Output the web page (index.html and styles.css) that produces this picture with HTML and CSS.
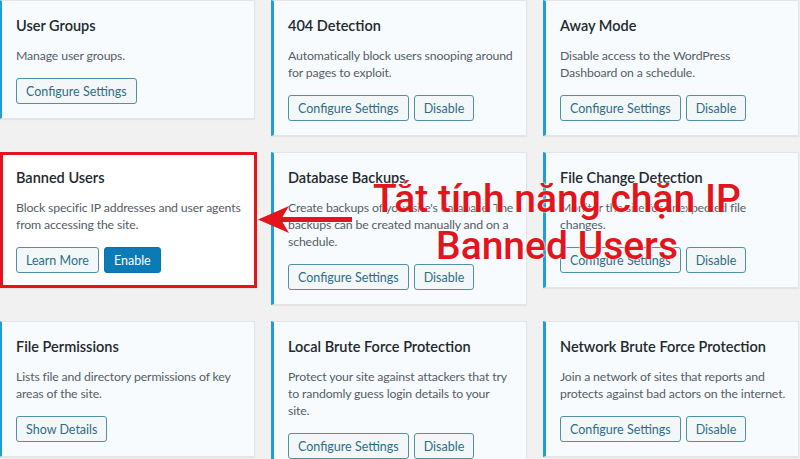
FILE: index.html
```html
<!DOCTYPE html>
<html lang="vi">

<head>
    <meta charset="UTF-8">
    <meta name="viewport" content="width=device-width, initial-scale=1.0">
    <title>Security Modules</title>
    <link rel="stylesheet" href="styles.css">
</head>

<body>
    <div class="modules">

        <div class="module active">
            <h3 class="module-title">User Groups</h3>
            <p class="module-desc">Manage user groups.</p>
            <div class="module-actions">
                <button class="btn">Configure Settings</button>
            </div>
        </div>

        <div class="module active">
            <h3 class="module-title">404 Detection</h3>
            <p class="module-desc">Automatically block users snooping around<br>for pages to exploit.</p>
            <div class="module-actions">
                <button class="btn">Configure Settings</button>
                <button class="btn">Disable</button>
            </div>
        </div>

        <div class="module active">
            <h3 class="module-title">Away Mode</h3>
            <p class="module-desc">Disable access to the WordPress<br>Dashboard on a schedule.</p>
            <div class="module-actions">
                <button class="btn">Configure Settings</button>
                <button class="btn">Disable</button>
            </div>
        </div>

        <div class="module highlight">
            <h3 class="module-title">Banned Users</h3>
            <p class="module-desc">Block specific IP addresses and user agents<br>from accessing the site.</p>
            <div class="module-actions">
                <button class="btn">Learn More</button>
                <button class="btn btn-primary">Enable</button>
            </div>
        </div>

        <div class="module active">
            <h3 class="module-title">Database Backups</h3>
            <p class="module-desc">Create backups of your site's database. The<br>backups can be created manually and on a<br>schedule.</p>
            <div class="module-actions">
                <button class="btn">Configure Settings</button>
                <button class="btn">Disable</button>
            </div>
        </div>

        <div class="module active">
            <h3 class="module-title">File Change Detection</h3>
            <p class="module-desc">Monitor the site for unexpected file<br>changes.</p>
            <div class="module-actions">
                <button class="btn">Configure Settings</button>
                <button class="btn">Disable</button>
            </div>
        </div>

        <div class="module active">
            <h3 class="module-title">File Permissions</h3>
            <p class="module-desc">Lists file and directory permissions of key<br>areas of the site.</p>
            <div class="module-actions">
                <button class="btn">Show Details</button>
            </div>
        </div>

        <div class="module active">
            <h3 class="module-title">Local Brute Force Protection</h3>
            <p class="module-desc">Protect your site against attackers that try<br>to randomly guess login details to your<br>site.</p>
            <div class="module-actions">
                <button class="btn">Configure Settings</button>
                <button class="btn">Disable</button>
            </div>
        </div>

        <div class="module active">
            <h3 class="module-title">Network Brute Force Protection</h3>
            <p class="module-desc">Join a network of sites that reports and<br>protects against bad actors on the internet.</p>
            <div class="module-actions">
                <button class="btn">Configure Settings</button>
                <button class="btn">Disable</button>
            </div>
        </div>

    </div>

    <!-- chú thích đè lên ảnh -->
    <svg class="note-arrow" width="96" height="30" viewBox="0 0 96 30">
        <path d="M0 13.5 L31 0 L23 13.5 L31 27 Z" fill="#e3141b" />
        <rect x="20" y="11" width="74" height="5" fill="#e3141b" />
    </svg>
    <div class="note-text">Tắt tính năng chặn IP<br>Banned Users</div>
</body>

</html>
```

FILE: styles.css
```css
body {
    margin: 0;
    padding: 0;
    height: 459px;
    overflow: hidden;
    background-color: #f1f1f1;
    font-family: Lato, "Open Sans", sans-serif;
    position: relative;
}

.modules {
    display: grid;
    grid-template-columns: 256px 256px 256px;
    column-gap: 16px;
    row-gap: 16px;
    align-items: start;
    margin-left: -1px;
}

.module {
    box-sizing: border-box;
    background-color: #fff;
    border: 1px solid #e4e4e4;
    box-shadow: 0 1px 1px rgba(0, 0, 0, 0.05);
    padding: 14px 10px 14px 14px;
}

.module.active {
    background-color: #f7fbfd;
    border-left: 3px solid #1e9fcf;
}

/* khung đỏ quanh Banned Users */
.module.highlight {
    border: 3px solid #e3141b;
    padding: 12px 8px 12px 13px;
    margin-left: 1px;
    margin-right: -2px;
}

.module-title {
    margin: 0;
    font-size: 14.5px;
    line-height: 22px;
    font-weight: 600;
    color: #23282d;
}

.module-desc {
    margin: 10px 0 14px 0;
    font-size: 12.3px;
    letter-spacing: -0.15px;
    line-height: 17px;
    color: #555d66;
    white-space: nowrap;
}

.module-actions {
    display: flex;
    gap: 5px;
}

.btn {
    font-family: inherit;
    font-size: 12.5px;
    height: 26px;
    padding: 0 9px;
    color: #2c6e86;
    background-color: #f4f7f8;
    border: 1px solid #4f90a6;
    border-radius: 3px;
    cursor: pointer;
}

.btn-primary {
    color: #fff;
    background-color: #0a7bb6;
    border-color: #0a73aa;
}

.note-arrow {
    position: absolute;
    left: 258px;
    top: 206px;
}

.note-text {
    position: absolute;
    left: 357px;
    top: 176px;
    width: 400px;
    text-align: center;
    font-family: Roboto, "Noto Sans", sans-serif;
    font-size: 39px;
    font-weight: 500;
    line-height: 47px;
    color: #e3141b;
    text-shadow: 0 0 2px #f7fbfd, 0 0 2px #f7fbfd;
}
```
